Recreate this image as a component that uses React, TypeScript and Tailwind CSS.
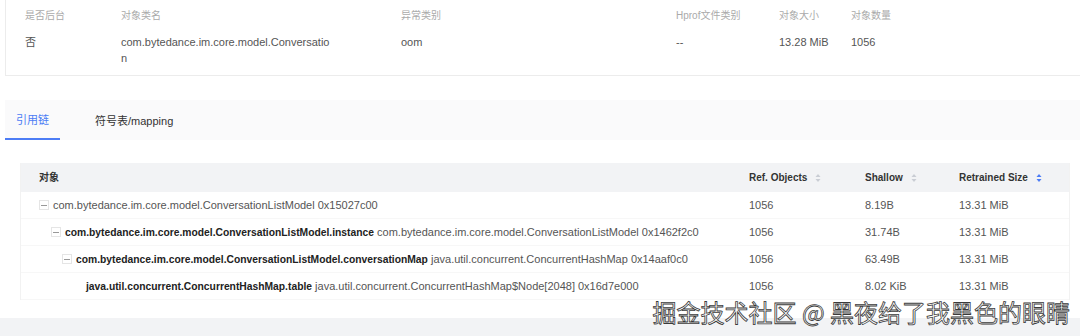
import React from "react";

type Row = {
  depth: number;
  name: string;
  bold?: boolean;
  detail?: string;
  toggle: boolean;
  refs: string;
  shallow: string;
  retained: string;
};

const rows: Row[] = [
  {
    depth: 0,
    name: "com.bytedance.im.core.model.ConversationListModel 0x15027c00",
    toggle: true,
    refs: "1056",
    shallow: "8.19B",
    retained: "13.31 MiB",
  },
  {
    depth: 1,
    name: "com.bytedance.im.core.model.ConversationListModel.instance",
    bold: true,
    detail: "com.bytedance.im.core.model.ConversationListModel 0x1462f2c0",
    toggle: true,
    refs: "1056",
    shallow: "31.74B",
    retained: "13.31 MiB",
  },
  {
    depth: 2,
    name: "com.bytedance.im.core.model.ConversationListModel.conversationMap",
    bold: true,
    detail: "java.util.concurrent.ConcurrentHashMap 0x14aaf0c0",
    toggle: true,
    refs: "1056",
    shallow: "63.49B",
    retained: "13.31 MiB",
  },
  {
    depth: 3,
    name: "java.util.concurrent.ConcurrentHashMap.table",
    bold: true,
    detail: "java.util.concurrent.ConcurrentHashMap$Node[2048] 0x16d7e000",
    toggle: false,
    refs: "1056",
    shallow: "8.02 KiB",
    retained: "13.31 MiB",
  },
];

const indent = ["pl-[18px]", "pl-[30px]", "pl-[41px]", "pl-[65px]"];

function SortIcon({ active }: { active?: boolean }) {
  const c = active ? "#4c7cf5" : "#c9cdd4";
  return (
    <svg width="6" height="10" viewBox="0 0 6 10" className="ml-[8px]">
      <path d="M3 1 L5.5 4 H0.5 Z" fill={c} />
      <path d="M3 9 L5.5 6 H0.5 Z" fill={c} />
    </svg>
  );
}

function Minus() {
  return (
    <span className="mr-[4px] flex h-[10px] w-[10px] items-center justify-center border border-[#e5e5e5] bg-white">
      <span className="h-px w-[6px] bg-[#999999]" />
    </span>
  );
}

export default function App() {
  const meta = [
    { label: "是否后台", value: "否", w: "w-[96px]" },
    { label: "对象类名", value: "com.bytedance.im.core.model.Conversatio", wrap: "n", w: "w-[280px]" },
    { label: "异常类别", value: "oom", w: "w-[275px]" },
    { label: "Hprof文件类别", value: "--", w: "w-[103px]" },
    { label: "对象大小", value: "13.28 MiB", w: "w-[72px]" },
    { label: "对象数量", value: "1056", w: "w-[80px]" },
  ];

  return (
    <div className="relative h-[336px] w-[1080px] overflow-hidden bg-white font-['Liberation_Sans','Noto_Sans_CJK_SC',sans-serif] text-[11px] text-[#555555]">
      {/* info card */}
      <div className="ml-[5px] h-[76px] border-b border-l border-[#ececec] bg-white pl-[19px] pt-[9px]">
        <div className="flex">
          {meta.map((m) => (
            <div key={m.label} className={`${m.w} shrink-0`}>
              <div className="text-[10px] leading-[14px] text-[#aaaaaa]">{m.label}</div>
              <div className="mt-[11px] leading-[16px] text-[#555555]">
                {m.value}
                {m.wrap && <div>{m.wrap}</div>}
              </div>
            </div>
          ))}
        </div>
      </div>

      {/* tabs */}
      <div className="ml-[5px] mt-[24px] flex h-[40px] items-end bg-[#fafafb]">
        <div className="flex h-full w-[55px] flex-col items-center justify-center border-b-2 border-[#4c7cf5] pt-[2px] text-[#4c7cf5]">
          引用链
        </div>
        <div className="ml-[35px] flex h-full items-center pt-[2px] text-[#333333]">符号表/mapping</div>
      </div>

      {/* table */}
      <div className="ml-[20px] mt-[23px] w-[1050px] border-l border-r border-[#f2f2f2] bg-white">
        <div className="flex h-[29px] items-center bg-[#f2f3f5] text-[10px] font-bold text-[#333333]">
          <div className="w-[728px] shrink-0 pl-[18px]">对象</div>
          <div className="flex w-[116px] shrink-0 items-center">
            Ref. Objects
            <SortIcon />
          </div>
          <div className="flex w-[94px] shrink-0 items-center">
            Shallow
            <SortIcon />
          </div>
          <div className="flex shrink-0 items-center">
            Retrained Size
            <SortIcon active />
          </div>
        </div>
        {rows.map((r, i) => (
          <div key={i} className="flex h-[27px] items-center border-b border-[#f7f7f7] text-[#555555]">
            <div className={`flex w-[728px] shrink-0 items-center whitespace-nowrap ${indent[r.depth]}`}>
              {r.toggle && <Minus />}
              {r.bold ? (
                <span>
                  <span className="text-[10.3px] font-bold text-[#222222]">{r.name}</span> {r.detail}
                </span>
              ) : (
                <span>{r.name}</span>
              )}
            </div>
            <div className="w-[116px] shrink-0">{r.refs}</div>
            <div className="w-[94px] shrink-0">{r.shallow}</div>
            <div className="shrink-0">{r.retained}</div>
          </div>
        ))}
      </div>

      {/* bottom bar */}
      <div className="mt-[18px] h-[20px] bg-[#f2f3f5]" />

      {/* watermark */}
      <div className="absolute right-[10px] top-[297px] font-['Noto_Sans_CJK_SC',sans-serif] text-[24px] leading-[30px] text-white [-webkit-text-stroke:0.8px_#3a3a3a]">
        掘金技术社区 @ 黑夜给了我黑色的眼睛
      </div>
    </div>
  );
}
